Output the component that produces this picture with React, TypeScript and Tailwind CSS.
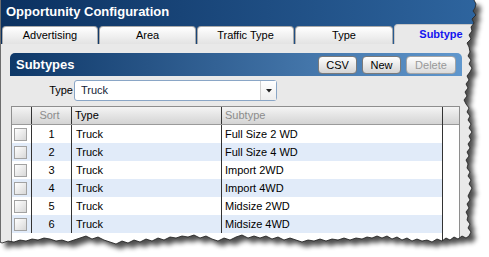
import React from 'react';

const rows = [
  { sort: 1, type: 'Truck', subtype: 'Full Size 2 WD' },
  { sort: 2, type: 'Truck', subtype: 'Full Size 4 WD' },
  { sort: 3, type: 'Truck', subtype: 'Import 2WD' },
  { sort: 4, type: 'Truck', subtype: 'Import 4WD' },
  { sort: 5, type: 'Truck', subtype: 'Midsize 2WD' },
  { sort: 6, type: 'Truck', subtype: 'Midsize 4WD' },
];

const tabs = [
  { label: 'Advertising', w: 'w-[96px]' },
  { label: 'Area', w: 'w-[97px]' },
  { label: 'Traffic Type', w: 'w-[97px]' },
  { label: 'Type', w: 'w-[98px]' },
];

// torn paper edge, right side then bottom
const right: number[][] = [
  [474, 0], [476, 4], [475, 8], [473, 11], [476, 15], [472, 19], [474, 23], [471, 27], [472, 31], [469, 35],
  [471, 39], [467, 43], [469, 47], [470, 52], [468, 56], [471, 60], [469, 64], [472, 68], [470, 72], [467, 76],
  [469, 80], [466, 84], [468, 88], [465, 92], [467, 96], [464, 100], [466, 104], [469, 108], [467, 112], [470, 116],
  [468, 120], [471, 124], [469, 128], [472, 132], [469, 136], [471, 140], [468, 144], [470, 148], [467, 152], [469, 156],
  [466, 160], [468, 164], [467, 168], [470, 172], [468, 176], [471, 180], [469, 184], [472, 188], [470, 192], [468, 196],
  [470, 200], [467, 204], [469, 208], [466, 212], [468, 216], [467, 220], [470, 224], [468, 228], [471, 232], [469, 236],
];
const bottom: number[][] = [
  [466, 238], [462, 236], [458, 239], [454, 237], [450, 240], [446, 238], [442, 241], [437, 239], [432, 242], [427, 240],
  [422, 241], [417, 239], [412, 241], [407, 238], [402, 240], [397, 237], [392, 239], [387, 236], [382, 238], [377, 236],
  [372, 238], [367, 237], [362, 239], [356, 238], [350, 240], [344, 238], [338, 240], [332, 239], [326, 241], [320, 239],
  [314, 241], [308, 240], [302, 242], [296, 240], [290, 238], [284, 240], [278, 237], [272, 239], [266, 236], [260, 238],
  [254, 236], [248, 238], [242, 235], [236, 237], [230, 240], [224, 238], [218, 241], [212, 239], [206, 236], [200, 238],
  [194, 235], [188, 237], [182, 236], [176, 238], [170, 237], [164, 240], [158, 238], [152, 241], [146, 239], [140, 242],
  [134, 240], [128, 243], [122, 241], [116, 244], [110, 242], [104, 240], [98, 237], [92, 239], [86, 236], [80, 238],
  [74, 240], [68, 242], [62, 240], [56, 241], [50, 239], [44, 238], [38, 240], [32, 239], [26, 241], [20, 240],
  [14, 242], [8, 241], [2, 243], [0, 242],
];
const pts = [...right, ...bottom];
const edge = 'M' + pts.map((p) => p.join(' ')).join(' L');
const shape = 'M0 0 L' + pts.map((p) => p.join(' ')).join(' L') + ' Z';

function TornEdge() {
  return (
    <svg className="pointer-events-none absolute left-0 top-0" width="489" height="257" viewBox="0 0 489 257">
      <defs>
        <filter id="tornBlur" x="-10%" y="-10%" width="120%" height="120%">
          <feGaussianBlur stdDeviation="2.8" />
        </filter>
        <mask id="outside">
          <rect width="489" height="257" fill="white" />
          <path d={shape} fill="black" />
        </mask>
      </defs>
      <path d={`M0 0H489V257H0Z ${shape}`} fillRule="evenodd" fill="#ffffff" />
      <g mask="url(#outside)">
        <path d={shape} transform="translate(5 5)" fill="#000" opacity="0.7" filter="url(#tornBlur)" />
      </g>
      <path d={edge} fill="none" stroke="#1a1a1a" strokeWidth="0.8" />
    </svg>
  );
}

function Checkbox() {
  return <div className="h-[13px] w-[13px] border border-[#a2a2a2] bg-linear-to-br from-white to-[#d8d8d8]" />;
}

export default function App() {
  return (
    <div className="relative h-[257px] w-[489px] overflow-hidden bg-white font-[Liberation_Sans,Arial,sans-serif] text-[11px] text-black">
      <div className="flex h-[257px] w-[489px] flex-col border-l border-[#6d6d6d] bg-[#e9e9e9]">
        <div className="bg-linear-to-r from-[#0b3160] to-[#2f66a0]">
          <div className="flex h-[24px] items-center pl-[5px] text-[13px] font-bold text-white">Opportunity Configuration</div>
          <div className="flex h-[20px] items-end gap-[1px] pl-[1px]">
            {tabs.map((t) => (
              <div
                key={t.label}
                className={`${t.w} flex h-[18px] items-center justify-center rounded-t-[4px] border border-b-0 border-[#a9a9a9] bg-linear-to-b from-white to-[#e3e3e3]`}
              >
                {t.label}
              </div>
            ))}
            <div className="flex h-[20px] flex-1 items-center justify-center rounded-tl-[4px] border-l border-t border-[#c6c6c6] bg-[#e9e9e9] pr-[2px] font-bold text-[#1414f0]">
              Subtype
            </div>
          </div>
        </div>

        <div className="flex-1 pl-[9px] pt-[9px]">
          <div className="w-[452px]">
            <div className="flex h-[23px] items-center justify-between rounded-t-[5px] bg-linear-to-r from-[#0e3868] to-[#6097cd] px-[6px]">
              <span className="text-[13px] font-bold text-white">Subtypes</span>
              <div className="flex gap-[5px]">
                <button className="h-[18px] w-[39px] rounded-[4px] border border-[#7a7a7a] bg-linear-to-b from-white to-[#d4d4d4]">CSV</button>
                <button className="h-[18px] w-[39px] rounded-[4px] border border-[#7a7a7a] bg-linear-to-b from-white to-[#d4d4d4]">New</button>
                <button className="h-[18px] w-[50px] rounded-[4px] border border-[#a5a5a5] bg-linear-to-b from-white to-[#dadada] text-[#999999]">Delete</button>
              </div>
            </div>

            <div className="flex items-center pt-[4px]">
              <span className="w-[64px] pr-[1px] text-right">Type</span>
              <div className="flex h-[21px] w-[203px] items-center rounded-[3px] border border-[#8aa6c6] bg-white">
                <span className="flex-1 pl-[6px] text-[#142236]">Truck</span>
                <div className="flex h-[19px] w-[16px] items-center justify-center border-l border-[#d0d0d0] bg-linear-to-b from-white to-[#eeeeee]">
                  <svg width="6" height="4" viewBox="0 0 6 4">
                    <polygon points="0,0 6,0 3,3.5" fill="#222" />
                  </svg>
                </div>
              </div>
            </div>

            <div className="ml-[1px] mt-[5px] flex h-[160px] w-[449px] border-l border-r border-t border-[#8e8e8e] bg-white">
              <div className="w-[430px]">
                <div className="flex h-[18px] border-b border-[#9a9a9a] bg-linear-to-b from-[#f4f4f4] to-[#d4d4d4] text-[#8c8c8c]">
                  <div className="w-[20px] border-r border-[#333]" />
                  <div className="flex w-[40px] items-center justify-center border-r border-[#333] pr-[4px]">Sort</div>
                  <div className="flex w-[150px] items-center border-r border-[#333] pl-[3px] text-black">Type</div>
                  <div className="flex w-[220px] items-center pl-[3px]">Subtype</div>
                </div>
                {rows.map((r, i) => (
                  <div key={r.sort} className={`flex h-[18px] ${i % 2 ? 'bg-[#e1ebf9]' : 'bg-white'}`}>
                    <div className="flex w-[20px] items-center border-r border-[#333] pl-[2px]">
                      <Checkbox />
                    </div>
                    <div className="flex w-[40px] items-center justify-center border-r border-[#333]">{r.sort}</div>
                    <div className="flex w-[150px] items-center border-r border-[#333] pl-[4px]">{r.type}</div>
                    <div className="flex w-[220px] items-center pl-[3px]">{r.subtype}</div>
                  </div>
                ))}
              </div>
              <div className="w-[17px] border-l border-[#333]">
                <div className="h-[18px] border-b border-[#9a9a9a] bg-linear-to-b from-[#f4f4f4] to-[#d4d4d4]" />
              </div>
            </div>
          </div>
        </div>
      </div>
      <TornEdge />
    </div>
  );
}
